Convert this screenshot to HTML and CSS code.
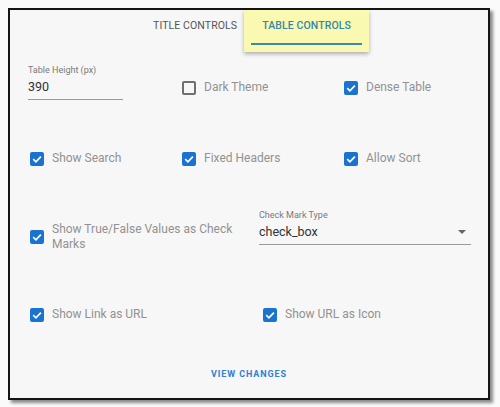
FILE: index.html
```html
<!DOCTYPE html>
<html>
<head>
<meta charset="utf-8">
<link rel="stylesheet" href="styles.css">
</head>
<body>
<div class="frame">
  <div class="tabs">
    <div class="tab">Title Controls</div>
    <div class="highlight">
      <div class="tab active">Table Controls</div>
    </div>
  </div>

  <div class="content">
    <div class="row row1 three">
      <div class="field field-height">
        <div class="field-label">Table Height (px)</div>
        <div class="field-value">390</div>
      </div>
      <label class="check end">
        <span class="box"></span>
        <span class="text">Dark Theme</span>
      </label>
      <label class="check end">
        <span class="box on"><svg viewBox="0 0 14 14"><path d="M3.2 7.2 L5.9 9.8 L10.9 4.6" /></svg></span>
        <span class="text">Dense Table</span>
      </label>
    </div>

    <div class="row row2 three">
      <label class="check">
        <span class="box on"><svg viewBox="0 0 14 14"><path d="M3.2 7.2 L5.9 9.8 L10.9 4.6" /></svg></span>
        <span class="text">Show Search</span>
      </label>
      <label class="check">
        <span class="box on"><svg viewBox="0 0 14 14"><path d="M3.2 7.2 L5.9 9.8 L10.9 4.6" /></svg></span>
        <span class="text">Fixed Headers</span>
      </label>
      <label class="check">
        <span class="box on"><svg viewBox="0 0 14 14"><path d="M3.2 7.2 L5.9 9.8 L10.9 4.6" /></svg></span>
        <span class="text">Allow Sort</span>
      </label>
    </div>

    <div class="row row3 two">
      <label class="check wrap">
        <span class="box on"><svg viewBox="0 0 14 14"><path d="M3.2 7.2 L5.9 9.8 L10.9 4.6" /></svg></span>
        <span class="text">Show True/False Values as Check Marks</span>
      </label>
      <div class="field field-select">
        <div class="field-label">Check Mark Type</div>
        <div class="field-value select-value">
          <span>check_box</span>
          <span class="caret"></span>
        </div>
      </div>
    </div>

    <div class="row row4 two">
      <label class="check">
        <span class="box on"><svg viewBox="0 0 14 14"><path d="M3.2 7.2 L5.9 9.8 L10.9 4.6" /></svg></span>
        <span class="text">Show Link as URL</span>
      </label>
      <label class="check shift">
        <span class="box on"><svg viewBox="0 0 14 14"><path d="M3.2 7.2 L5.9 9.8 L10.9 4.6" /></svg></span>
        <span class="text">Show URL as Icon</span>
      </label>
    </div>

    <div class="actions">
      <span class="btn">View Changes</span>
    </div>
  </div>
</div>
</body>
</html>
```

FILE: styles.css
```css
html, body {
  margin: 0;
  padding: 0;
  background: #fafafa;
}
body {
  padding: 8px;
  font-family: Roboto, "Liberation Sans", Arial, sans-serif;
}
.frame {
  width: 482px;
  box-sizing: border-box;
  border: 2px solid #141414;
  background: #f7f7f7;
  box-shadow: 3px 3px 3px rgba(0, 0, 0, 0.45);
  padding-bottom: 16px;
}
.tabs {
  display: flex;
  justify-content: center;
  align-items: flex-start;
  height: 42px;
}
.tab {
  font-size: 10.5px;
  font-weight: 400;
  text-transform: uppercase;
  letter-spacing: 0.1px;
  line-height: 15px;
  padding: 8px 7px 0 24px;
  color: #555;
  white-space: nowrap;
}
.highlight {
  background: #f9f9b2;
  padding: 0 7px 7px;
  box-shadow: 0 2px 4px rgba(0, 0, 0, 0.3);
  position: relative;
}
.tab.active {
  color: #3489a6;
  font-weight: 500;
  padding: 8px 11px 10px;
  border-bottom: 2px solid #3a8aa8;
}
.content {
  padding: 0 18px;
}
.row {
  display: grid;
}
.three {
  grid-template-columns: 152px 162px 1fr;
}
.two {
  grid-template-columns: 231px 1fr;
}
.row1 {
  margin-top: 13px;
  align-items: end;
}
.row2 {
  margin-top: 51px;
}
.row3 {
  margin-top: 44px;
  align-items: start;
}
.row4 {
  margin-top: 55px;
}
.field-label {
  font-size: 9px;
  line-height: 11px;
  color: #7a7a7a;
}
.field-value {
  font-size: 12.5px;
  line-height: 15px;
  color: #333;
  margin-top: 3px;
  padding-bottom: 5px;
  border-bottom: 1px solid #9a9a9a;
}
.field-height {
  width: 95px;
}
.field-select {
  width: 212px;
}
.select-value {
  display: flex;
  justify-content: space-between;
  align-items: center;
}
.caret {
  width: 0;
  height: 0;
  border-left: 4px solid transparent;
  border-right: 4px solid transparent;
  border-top: 4px solid #666;
  margin-right: 5px;
}
.check {
  display: flex;
  align-items: center;
  padding-left: 2px;
}
.check.end {
  padding-bottom: 5px;
}
.check.wrap {
  margin-top: 12px;
  padding-right: 20px;
}
.check.shift {
  padding-left: 4px;
}
.box {
  width: 14px;
  height: 14px;
  box-sizing: border-box;
  border: 2px solid #6f6f6f;
  border-radius: 2px;
  flex: none;
  margin-right: 8px;
  display: flex;
}
.box.on {
  background: #1a73d1;
  border-color: #1a73d1;
}
.box svg {
  width: 14px;
  height: 14px;
  margin: -2px;
}
.box svg path {
  fill: none;
  stroke: #fff;
  stroke-width: 1.7;
}
.text {
  font-size: 12px;
  line-height: 15px;
  color: #929292;
}
.actions {
  margin-top: 45px;
  display: flex;
  justify-content: center;
}
.btn {
  font-size: 9px;
  font-weight: 700;
  letter-spacing: 0.9px;
  line-height: 15px;
  text-transform: uppercase;
  color: #2f80d6;
}
```
